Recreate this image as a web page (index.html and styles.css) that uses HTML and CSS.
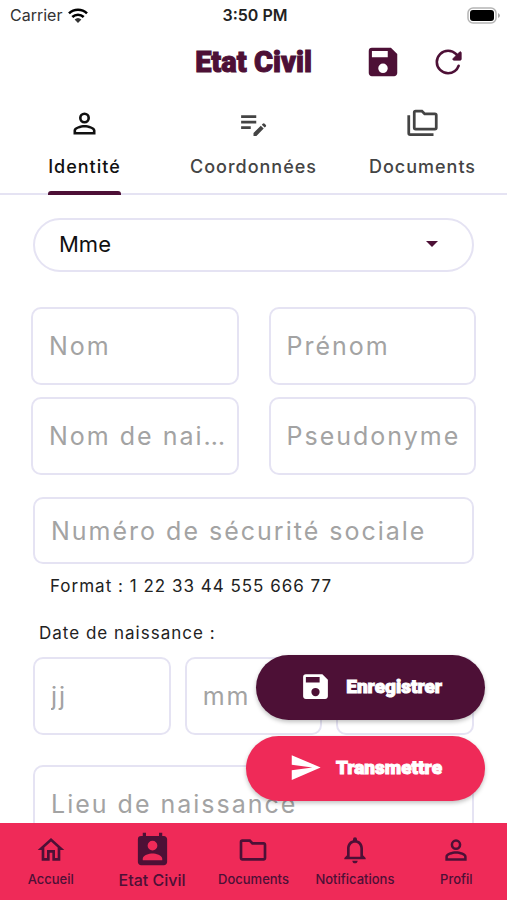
FILE: index.html
```html
<!DOCTYPE html>
<html lang="fr">
<head>
<meta charset="utf-8">
<meta name="viewport" content="width=device-width, initial-scale=1">
<title>Etat Civil</title>
<link rel="stylesheet" href="styles.css">
</head>
<body>
<div class="status">
  <span class="carrier">Carrier
    <svg class="wifi" viewBox="0 0 20 15" aria-hidden="true"><g fill="none" stroke="#000" stroke-width="2.6"><path d="M1 5.4a13 13 0 0 1 18 0"/><path d="M4.3 9a8.3 8.3 0 0 1 11.4 0"/></g><path d="M10 15 6.6 11.500a5 5 0 0 1 6.800 0z"/></svg>
  </span>
  <time class="clock">3:50 PM</time>
  <svg class="battery" viewBox="0 0 33 17" aria-hidden="true"><rect x="1" y="1" width="28" height="15" rx="5" fill="#fff" stroke="#b5b5b5" stroke-width="1.500"/><rect x="3" y="3" width="24" height="11" rx="3"/><path d="M31 6v5q2-1 2-2.500T31 6z" fill="#aaa"/></svg>
</div>
<header class="top">
  <h1>Etat Civil</h1>
  <div class="actions">
    <button type="button" aria-label="Enregistrer"><svg class="large" viewBox="0 0 24 24"><path d="M17 3H5a2 2 0 0 0-2 2v14c0 1.100.9 2 2 2h14c1.100 0 2-.9 2-2V7l-4-4zm-5 16a3 3 0 1 1 0-6 3 3 0 0 1 0 6zm3-10H5V5h10v4z"/></svg></button>
    <button type="button" aria-label="Actualiser"><svg class="reload" viewBox="0 0 512 512"><path d="M400 148l-21-25A191 191 0 0 0 240 64C134 64 48 150 48 256s86 192 192 192a192 192 0 0 0 181-128" fill="none" stroke="currentColor" stroke-width="44" stroke-linecap="round"/><path d="M464 97v111a16 16 0 0 1-16 16H337c-14 0-21-17-11-27L437 86c10-10 27-3 27 11z" stroke="currentColor" stroke-width="14"/></svg></button>
  </div>
</header>
<nav class="tabs" aria-label="Sections">
  <a href="#identite" class="active" aria-current="page"><svg viewBox="0 0 24 24"><path d="M12 5.900a2.100 2.100 0 1 1 0 4.200 2.100 2.100 0 0 1 0-4.200m0 9c2.970 0 6.100 1.460 6.100 2.100v1.100H5.900V17c0-.64 3.130-2.100 6.100-2.100M12 4a4 4 0 1 0 0 8 4 4 0 0 0 0-8zm0 9c-2.670 0-8 1.340-8 4v3h16v-3c0-2.660-5.330-4-8-4z"/></svg><span>Identité</span></a>
  <a href="#coordonnees"><svg viewBox="0 0 24 24"><path d="M3 10h11v2H3v-2zm0-2h11V6H3v2zm0 8h7v-2H3v2zm15.010-3.130.71-.71a1 1 0 0 1 1.410 0l.71.71a1 1 0 0 1 0 1.410l-.71.71-2.120-2.120zm-.71.71-5.300 5.300V21h2.120l5.300-5.300-2.120-2.120z"/></svg><span>Coordonnées</span></a>
  <a href="#documents"><svg viewBox="0 0 24 24"><path d="M3 19h17v2H3a2 2 0 0 1-2-2V6h2v13zM23 6v9a2 2 0 0 1-2 2H7a2 2 0 0 1-2-2l.01-11A2 2 0 0 1 7 2h5l2 2h7a2 2 0 0 1 2 2zM7 15h14V6h-7.830l-2-2H7v11z"/></svg><span>Documents</span></a>
</nav>
<div class="stage">
  <main>
    <form id="identite">
      <div class="choice">
        <select aria-label="Civilité"><option>Mme</option><option>M.</option></select>
        <svg viewBox="0 0 12 6" aria-hidden="true"><path d="M0 0h12L6 6z"/></svg>
      </div>
      <div class="names">
        <input type="text" placeholder="Nom" aria-label="Nom">
        <input type="text" placeholder="Prénom" aria-label="Prénom">
        <input type="text" placeholder="Nom de naissance" aria-label="Nom de naissance">
        <input type="text" placeholder="Pseudonyme" aria-label="Pseudonyme">
      </div>
      <input class="wide" type="text" placeholder="Numéro de sécurité sociale" aria-label="Numéro de sécurité sociale" aria-describedby="format">
      <p class="hint" id="format">Format : 1 22 33 44 555 666 77</p>
      <fieldset>
        <legend>Date de naissance :</legend>
        <div class="dates">
          <input type="text" placeholder="jj" aria-label="Jour">
          <input type="text" placeholder="mm" aria-label="Mois">
          <input type="text" aria-label="Année">
        </div>
      </fieldset>
      <input class="wide place" type="text" placeholder="Lieu de naissance" aria-label="Lieu de naissance">
    </form>
  </main>
  <div class="floating">
    <button type="submit" form="identite" class="save"><svg viewBox="0 0 24 24"><path d="M17 3H5a2 2 0 0 0-2 2v14c0 1.100.9 2 2 2h14c1.100 0 2-.9 2-2V7l-4-4zm-5 16a3 3 0 1 1 0-6 3 3 0 0 1 0 6zm3-10H5V5h10v4z"/></svg>Enregistrer</button>
    <button type="button" class="send"><svg viewBox="0 0 24 24"><path d="M2 21l21-9L2 3v7l15 2-15 2z"/></svg>Transmettre</button>
  </div>
</div>
<nav class="bottom" aria-label="Navigation principale">
  <a href="#accueil"><svg viewBox="0 0 24 24"><path d="m12 5.690 5 4.500V18h-2v-6H9v6H7v-7.810l5-4.500M12 3 2 12h3v8h6v-6h2v6h6v-8h3L12 3z"/></svg><span>Accueil</span></a>
  <a href="#etat-civil" class="current" aria-current="page"><svg viewBox="0 0 24 24"><path d="M19 3h-1V1h-2v2H8V1H6v2H5a2 2 0 0 0-2 2v14c0 1.100.89 2 2 2h14c1.100 0 2-.9 2-2V5c0-1.100-.9-2-2-2zm-7 3a3 3 0 1 1 0 6 3 3 0 0 1 0-6zm6 12H6v-1c0-2 4-3.100 6-3.100s6 1.100 6 3.100v1z"/></svg><span>Etat Civil</span></a>
  <a href="#documents"><svg viewBox="0 0 24 24"><path d="m9.170 6 2 2H20v10H4V6h5.170M10 4H4a2 2 0 0 0-1.990 2L2 18c0 1.100.9 2 2 2h16c1.100 0 2-.9 2-2V8c0-1.100-.9-2-2-2h-8l-2-2z"/></svg><span>Documents</span></a>
  <a href="#notifications"><svg viewBox="0 0 24 24"><path d="M12 22c1.100 0 2-.9 2-2h-4c0 1.100.9 2 2 2zm6-6v-5c0-3.070-1.630-5.640-4.500-6.320V4a1.500 1.500 0 0 0-3 0v.68C7.640 5.360 6 7.920 6 11v5l-2 2v1h16v-1l-2-2zm-2 1H8v-6c0-2.480 1.510-4.500 4-4.500s4 2.020 4 4.500v6z"/></svg><span>Notifications</span></a>
  <a href="#profil"><svg viewBox="0 0 24 24"><path d="M12 5.900a2.100 2.100 0 1 1 0 4.200 2.100 2.100 0 0 1 0-4.200m0 9c2.970 0 6.100 1.460 6.100 2.100v1.100H5.900V17c0-.64 3.130-2.100 6.100-2.100M12 4a4 4 0 1 0 0 8 4 4 0 0 0 0-8zm0 9c-2.670 0-8 1.340-8 4v3h16v-3c0-2.660-5.330-4-8-4z"/></svg><span>Profil</span></a>
</nav>
</body>
</html>
```
FILE: styles.css
```css
:root {
  --plum: #4d1036;
  --pink: #ef2a58;
  --line: #e5e3f3;
}

* {
  box-sizing: border-box;
}

body {
  margin: 0;
  height: 100vh;
  display: flex;
  flex-direction: column;
  background: #fff;
  color: #222;
  font-family: Inter, "Liberation Sans", sans-serif;
}

button,
input,
select {
  font: inherit;
  color: inherit;
}

button {
  border: 0;
  background: none;
  padding: 0;
  cursor: pointer;
}

svg {
  display: block;
  fill: currentColor;
  flex: none;
}

a {
  color: inherit;
  text-decoration: none;
}

.status {
  display: grid;
  grid-template-columns: 1fr auto 1fr;
  align-items: center;
  height: 30px;
  padding: 0 7px 0 10px;
  font-size: 16px;
}

.carrier {
  display: flex;
  align-items: center;
  gap: 6px;
  color: #333;
}

.wifi {
  width: 20px;
  height: 15px;
}

.clock {
  font-weight: 600;
}

.battery {
  width: 33px;
  height: 17px;
  justify-self: end;
  color: #000;
}

.top {
  display: grid;
  grid-template-columns: 1fr auto 1fr;
  align-items: center;
  height: 64px;
  color: var(--plum);
}

h1 {
  grid-column: 2;
  margin: 0;
  font-family: Roboto, sans-serif;
  font-weight: 900;
  font-size: 29px;
  line-height: 32px;
  -webkit-text-stroke: 1px currentColor;
}

.actions {
  display: flex;
  align-items: center;
  gap: 32px;
  padding-left: 52px;
}

.large {
  width: 38px;
  height: 38px;
}

.reload {
  width: 30px;
  height: 30px;
}

.tabs {
  display: grid;
  grid-template-columns: repeat(3, 1fr);
  border-bottom: 2px solid var(--line);
  color: #444;
  font-size: 18px;
  font-weight: 450;
  line-height: 24px;
}

.tabs a {
  display: flex;
  flex-direction: column;
  align-items: center;
  gap: 15px;
  margin-bottom: -2px;
  padding-top: 13px;
}

.tabs svg {
  width: 33px;
  height: 33px;
}

.tabs span {
  letter-spacing: 1px;
}

.tabs span::after {
  content: "";
  display: block;
  height: 4px;
  margin-top: 12px;
  border-radius: 3px 3px 0 0;
}

.tabs .active {
  color: #111;
}

.tabs .active span::after {
  background: var(--plum);
}

.stage {
  position: relative;
  flex: 1;
  min-height: 0;
}

main {
  height: 100%;
  overflow-y: auto;
  scrollbar-width: none;
}

form {
  padding: 23px 33px;
}

input {
  width: 100%;
  min-width: 0;
  height: 78px;
  padding: 0 11px 0 16px;
  border: 2px solid var(--line);
  border-radius: 10px;
  background: #fff;
  font-size: 25px;
  letter-spacing: 2px;
  text-overflow: ellipsis;
}

input::placeholder {
  color: #a3a3a3;
  opacity: 1;
}

.choice {
  position: relative;
}

.choice select {
  appearance: none;
  display: block;
  width: 100%;
  height: 54px;
  padding: 0 24px 2px;
  border: 2px solid var(--line);
  border-radius: 27px;
  background: #fff;
  color: #111;
  font-size: 22px;
}

.choice svg {
  position: absolute;
  right: 36px;
  top: 23px;
  width: 12px;
  height: 6px;
  color: var(--plum);
  pointer-events: none;
}

.names {
  display: grid;
  grid-template-columns: 1fr 1fr;
  gap: 12px 30px;
  margin: 35px -2px 22px;
}

.wide {
  display: block;
  height: 67px;
}

.hint {
  margin: 12px 17px 0;
  font-size: 17px;
  line-height: 20px;
  letter-spacing: 1px;
}

fieldset {
  margin: 27px 0 0;
  padding: 0;
  border: 0;
  min-width: 0;
}

legend {
  padding: 0 6px;
  font-size: 17px;
  line-height: 20px;
  letter-spacing: 1px;
}

.dates {
  display: grid;
  grid-template-columns: repeat(3, 1fr);
  gap: 14px;
  padding-top: 14px;
}

.place {
  height: 78px;
  margin-top: 30px;
}

.floating {
  position: absolute;
  right: 22px;
  bottom: 22px;
  display: flex;
  flex-direction: column;
  align-items: flex-end;
  gap: 16px;
}

.floating button {
  display: flex;
  align-items: center;
  gap: 14px;
  height: 65px;
  padding: 0 43px 2px;
  border-radius: 33px;
  color: #fff;
  font-family: Roboto, sans-serif;
  font-size: 19px;
  font-weight: 900;
  -webkit-text-stroke: 1px currentColor;
  box-shadow: 0 2px 4px rgb(0 0 0 / 25%);
}

.floating svg {
  width: 33px;
  height: 33px;
}

.floating .save {
  background: var(--plum);
}

.floating .send {
  background: var(--pink);
}

.bottom {
  display: grid;
  grid-template-columns: repeat(5, 1fr);
  height: 77px;
  background: var(--pink);
  color: var(--plum);
  font-size: 13px;
  font-weight: 500;
  line-height: 18px;
}

.bottom a {
  display: flex;
  flex-direction: column;
  align-items: center;
  padding-top: 11px;
  gap: 4px;
}

.bottom svg {
  width: 32px;
  height: 32px;
}

.bottom .current {
  padding-top: 8px;
  gap: 1px;
  font-size: 16px;
}

.bottom .current svg {
  width: 39px;
  height: 39px;
}
```
